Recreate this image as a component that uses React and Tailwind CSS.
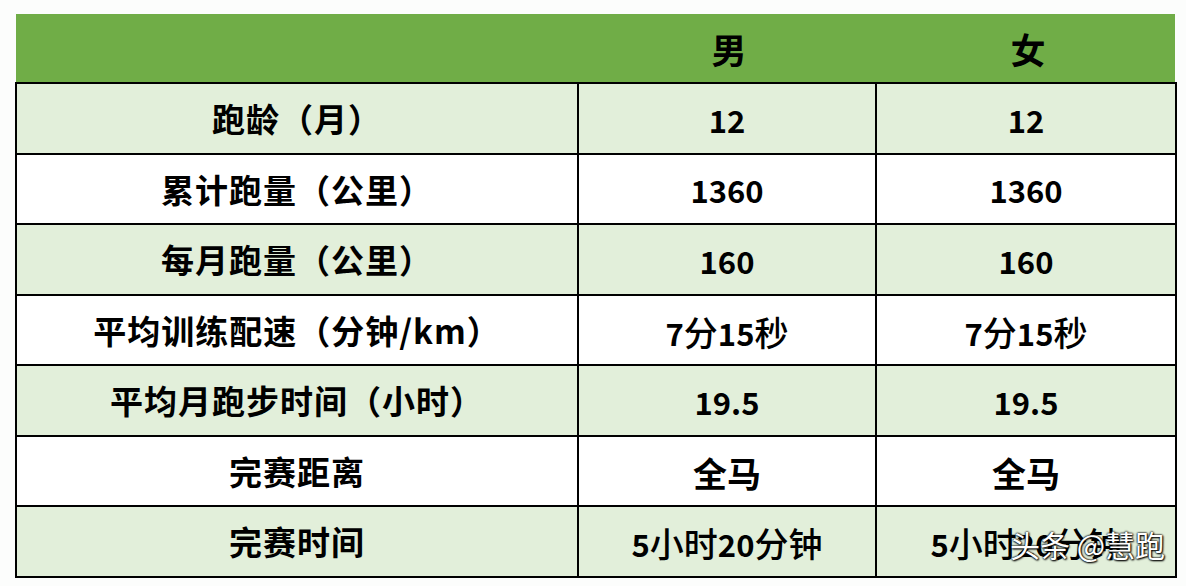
const rows = [
  { label: "跑龄（月）", m: [["12"]], f: [["12"]], tint: true },
  { label: "累计跑量（公里）", m: [["1360"]], f: [["1360"]] },
  { label: "每月跑量（公里）", m: [["160"]], f: [["160"]], tint: true },
  { label: "平均训练配速（分钟/km）", m: [["7"], ["分", 1], ["15"], ["秒", 1]], f: [["7"], ["分", 1], ["15"], ["秒", 1]] },
  { label: "平均月跑步时间（小时）", m: [["19.5"]], f: [["19.5"]], tint: true },
  { label: "完赛距离", m: [["全马", 2]], f: [["全马", 2]] },
  { label: "完赛时间", m: [["5"], ["小时", 1], ["20"], ["分钟", 1]], f: [["5"], ["小时", 1], ["20"], ["分钟", 1]], tint: true },
];

const Value = ({ parts }) => (
  <span className="flex items-baseline">
    {parts.map(([t, cjk], i) => (
      <span
        key={i}
        className={
          cjk === 1
            ? "text-[34px] font-medium"
            : cjk === 2
            ? "text-[34px] font-bold"
            : "text-[31px] font-bold"
        }
      >
        {t}
      </span>
    ))}
  </span>
);

export default function App() {
  return (
    <div
      className="relative w-[1186px] h-[586px] bg-[#fcfdfc] pt-[14px] pl-[15px] text-black"
      style={{ fontFamily: '"Noto Sans CJK SC", "Noto Sans", sans-serif' }}
    >
      <div className="w-[1162px]">
        <div className="grid grid-cols-[564px_298px_300px] h-[68px] bg-[#70ad47] ml-px mr-[2px] text-[35px] font-bold">
          <div></div>
          <div className="flex items-center justify-center pt-[2px]">男</div>
          <div className="flex items-center justify-center pt-[2px]">女</div>
        </div>
        <div className="border-b-2 border-black">
          {rows.map((r, i) => (
            <div
              key={i}
              className={
                "grid grid-cols-[564px_298px_300px] h-[70.5px] border-t-2 border-black " +
                (r.tint ? "bg-[#e2efda]" : "bg-white")
              }
            >
              <div className="flex items-center justify-center border-l-2 border-r-2 border-black text-[33px] font-bold tracking-[1px] pt-px">
                {r.label}
              </div>
              <div className="flex items-center justify-center border-r-2 border-black pt-[3px]">
                <Value parts={r.m} />
              </div>
              <div className="flex items-center justify-center border-r-2 border-black pt-[3px]">
                <Value parts={r.f} />
              </div>
            </div>
          ))}
        </div>
      </div>
      <div className="absolute left-[1010px] top-[522px] text-[30px] text-white font-normal [text-shadow:0_0_2px_#000,0_0_2px_#000,1px_1px_2px_#000]">
        头条 @慧跑
      </div>
    </div>
  );
}
